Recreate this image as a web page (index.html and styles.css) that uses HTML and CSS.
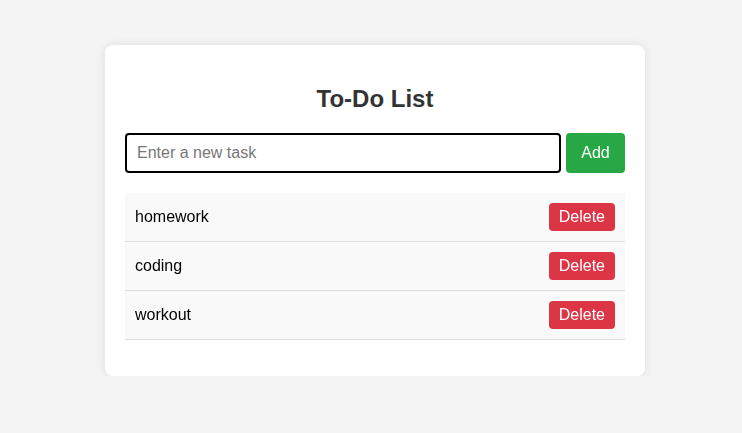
FILE: index.html
```html
<!DOCTYPE html>
<html>
<head>
<meta charset="utf-8">
<link rel="stylesheet" href="styles.css">
</head>
<body>
<div class="card">
  <h2 class="title">To-Do List</h2>
  <div class="entry">
    <input class="task-input" type="text" placeholder="Enter a new task" autofocus>
    <button class="btn-add">Add</button>
  </div>
  <ul class="tasks">
    <li class="task"><span>homework</span><button class="btn-del">Delete</button></li>
    <li class="task"><span>coding</span><button class="btn-del">Delete</button></li>
    <li class="task"><span>workout</span><button class="btn-del">Delete</button></li>
  </ul>
</div>
</body>
</html>
```
FILE: styles.css
```css
html, body {
  margin: 0;
  padding: 0;
}
body {
  background: #f4f4f4;
  font-family: "Liberation Sans", Arial, sans-serif;
  display: flex;
  justify-content: center;
  padding: 45px 0 0 8px;
}
.card {
  width: 500px;
  background: #fff;
  padding: 20px;
  border-radius: 8px;
  box-shadow: 0 0 10px rgba(0, 0, 0, 0.1);
}
.title {
  text-align: center;
  color: #333;
  font-size: 24px;
  margin: 20px 0 20px;
  line-height: 28px;
}
.entry {
  display: flex;
  gap: 5px;
}
.task-input {
  flex: 1;
  height: 40px;
  box-sizing: border-box;
  padding: 10px;
  font-size: 16px;
  font-family: "Liberation Sans", Arial, sans-serif;
  border: 2px solid #000;
  border-radius: 4px;
  outline: none;
  color: #000;
  min-width: 0;
  caret-color: #000;
}
.task-input::placeholder {
  color: #777;
}
.btn-add {
  width: 59px;
  height: 40px;
  background: #28a745;
  color: #fff;
  border: none;
  border-radius: 4px;
  font-size: 16px;
  font-family: "Liberation Sans", Arial, sans-serif;
  padding: 0;
}
.tasks {
  list-style: none;
  margin: 20px 0 16px;
  padding: 0;
}
.task {
  display: flex;
  justify-content: space-between;
  align-items: center;
  background: #f9f9f9;
  padding: 10px;
  border-bottom: 1px solid #ddd;
  font-size: 16px;
  color: #000;
}
.btn-del {
  height: 28px;
  padding: 0 10px;
  background: #dc3545;
  color: #fff;
  border: none;
  border-radius: 4px;
  font-size: 16px;
  font-family: "Liberation Sans", Arial, sans-serif;
}
```
